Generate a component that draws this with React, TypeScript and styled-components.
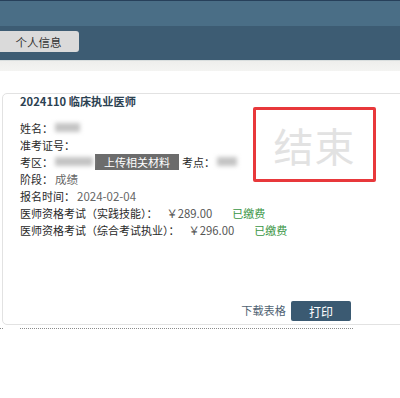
import React from "react";
import styled, { createGlobalStyle } from "styled-components";

const Global = createGlobalStyle`
  html, body { margin: 0; padding: 0; background: #ffffff; overflow: hidden; }
  body { font-family: "Noto Sans CJK SC", "Noto Sans", sans-serif; width: 400px; height: 398px; }
`;

const Page = styled.div`
  width: 400px;
  height: 398px;
  overflow: hidden;
  background: #fff;
`;

const TopBar = styled.div`
  height: 25px;
  border-top: 1px solid #27405a;
  background: #4a6e86;
`;

const NavBar = styled.div`
  height: 34px;
  background: #3d5c73;
  display: flex;
  align-items: flex-start;
  padding-top: 5px;
  box-sizing: border-box;
`;

const Tab = styled.div`
  margin-left: -10px;
  width: 89px;
  height: 21px;
  background: #dadada;
  border-radius: 3px;
  display: flex;
  align-items: center;
  justify-content: center;
  padding-left: 8px;
  box-sizing: border-box;
  font-size: 11.5px;
  color: #333;
`;

const Strip = styled.div`
  height: 10px;
  border-top: 1px solid #d9dede;
  background: linear-gradient(#eeeeec, #f4f4f2);
`;

const Content = styled.div`
  padding-top: 22px;
`;

const Card = styled.div`
  position: relative;
  margin-left: 2px;
  width: 470px;
  border: 1px solid #e2e2e2;
  border-radius: 5px;
  padding: 0 0 3px 17px;
  box-sizing: border-box;
`;

const Title = styled.div`
  font-size: 11.2px;
  font-weight: 700;
  line-height: 15px;
  color: #2c4252;
`;

const Rows = styled.div`
  margin-top: 10px;
  display: flex;
  flex-direction: column;
`;

const Row = styled.div`
  display: flex;
  align-items: center;
  height: 17px;
  font-size: 11px;
  color: #2a2a2a;
  white-space: nowrap;
`;

const Label = styled.span<{ $gap?: number }>`
  margin-left: ${(p) => p.$gap ?? 0}px;
  color: #2a2a2a;
`;

const Value = styled.span<{ $gap?: number }>`
  margin-left: ${(p) => p.$gap ?? 2}px;
  color: #666;
  font-size: 11.5px;
`;

const Price = styled.span<{ $gap: number }>`
  margin-left: ${(p) => p.$gap}px;
  color: #555;
  font-size: 11.3px;
`;

const Paid = styled.span<{ $gap: number }>`
  margin-left: ${(p) => p.$gap}px;
  color: #3a9645;
`;

const Blur = styled.span<{ $w: number; $gap?: number }>`
  display: inline-block;
  margin-left: ${(p) => p.$gap ?? 2}px;
  width: ${(p) => p.$w}px;
  height: 9px;
  background: #c4c4c4;
  filter: blur(2px);
`;

const UploadBtn = styled.span`
  margin-left: 2px;
  height: 16px;
  padding: 0 9px;
  background: #6c6c6c;
  color: #fff;
  font-size: 11px;
  line-height: 16px;
  display: inline-flex;
  align-items: center;
`;

const Footer = styled.div`
  margin-top: 63px;
  width: 331px;
  display: flex;
  justify-content: flex-end;
  align-items: center;
  gap: 5px;
`;

const LinkText = styled.span`
  font-size: 11.2px;
  color: #4f6373;
  margin-top: -2px;
`;

const PrintBtn = styled.button`
  width: 60px;
  height: 20px;
  border: none;
  border-radius: 2px;
  background: #3b5a72;
  color: #fff;
  font-family: inherit;
  font-size: 12px;
  padding: 0;
`;

const Dotted = styled.div`
  position: relative;
  margin: 3px 0 0 20px;
  width: 333px;
  border-top: 1px dotted #8a8a8a;
  &::before {
    content: "";
    position: absolute;
    left: -20px;
    top: -1px;
    width: 3px;
    border-top: 1px dotted #8a8a8a;
  }
`;

const Stamp = styled.div`
  position: absolute;
  left: 250px;
  top: 13px;
  width: 123px;
  height: 75px;
  border: 3px solid #e8383b;
  border-radius: 2px;
  box-sizing: border-box;
  display: flex;
  align-items: center;
  justify-content: center;
  font-size: 40px;
  color: #e2e2e2;
  letter-spacing: 1px;
`;

export default function App() {
  return (
    <Page>
      <Global />
      <TopBar />
      <NavBar>
        <Tab>个人信息</Tab>
      </NavBar>
      <Strip />
      <Content>
        <Card>
          <Title>2024110 临床执业医师</Title>
          <Rows>
            <Row>
              <Label>姓名：</Label>
              <Blur $w={25} />
            </Row>
            <Row>
              <Label>准考证号：</Label>
            </Row>
            <Row>
              <Label>考区：</Label>
              <Blur $w={38} />
              <UploadBtn>上传相关材料</UploadBtn>
              <Label $gap={3}>考点：</Label>
              <Blur $w={20} />
            </Row>
            <Row>
              <Label>阶段：</Label>
              <Value>成绩</Value>
            </Row>
            <Row>
              <Label>报名时间：</Label>
              <Value>2024-02-04</Value>
            </Row>
            <Row>
              <Label>医师资格考试（实践技能）：</Label>
              <Price $gap={9}>￥289.00</Price>
              <Paid $gap={20}>已缴费</Paid>
            </Row>
            <Row>
              <Label>医师资格考试（综合考试执业）：</Label>
              <Price $gap={9}>￥296.00</Price>
              <Paid $gap={20}>已缴费</Paid>
            </Row>
          </Rows>
          <Footer>
            <LinkText>下载表格</LinkText>
            <PrintBtn>打印</PrintBtn>
          </Footer>
          <Stamp>结束</Stamp>
        </Card>
        <Dotted />
      </Content>
    </Page>
  );
}
